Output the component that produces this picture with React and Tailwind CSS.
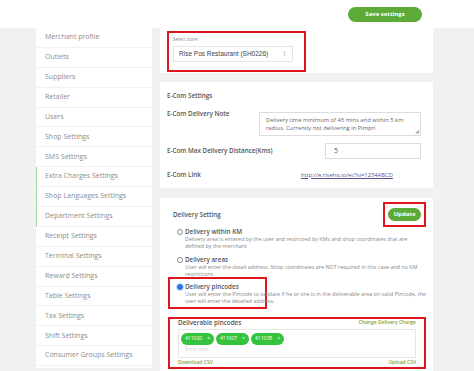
const menuItems = [
  "Merchant profile",
  "Outlets",
  "Suppliers",
  "Retailer",
  "Users",
  "Shop Settings",
  "SMS Settings",
  "Extra Charges Settings",
  "Shop Languages Settings",
  "Department Settings",
  "Receipt Settings",
  "Terminal Settings",
  "Reward Settings",
  "Table Settings",
  "Tax Settings",
  "Shift Settings",
  "Consumer Groups Settings",
];

const highlighted = ["Extra Charges Settings", "Shop Languages Settings", "Department Settings"];

const deliveryOptions = [
  {
    label: "Delivery within KM",
    desc: "Delivery area is entered by the user and restricted by KMs and shop coordinates that are defined by the merchant",
  },
  {
    label: "Delivery areas",
    desc: "User will enter the detail address. Shop coordinates are NOT required in this case and no KM restrictions",
  },
];

const pincodes = ["411020", "411007", "411038"];

function Radio({ checked }) {
  return (
    <span
      className={
        "mt-[1px] h-[6px] w-[6px] shrink-0 rounded-full border " +
        (checked ? "border-[#2a73e8] bg-[#2a73e8] shadow-[0_0_0_1px_#cfe0fb]" : "border-[#888] bg-white")
      }
    />
  );
}

function Sidebar() {
  return (
    <div className="w-[116px] bg-white pb-[2px]">
      {menuItems.map((item) => (
        <div
          key={item}
          className={
            "flex h-[19.9px] items-center border-b border-[#f0f0f0] pl-[8px] text-[7px] text-[#8c8c8c] " +
            (highlighted.includes(item) ? "border-l border-l-[#9fd59a]" : "border-l border-l-white")
          }
        >
          {item}
        </div>
      ))}
    </div>
  );
}

function StoreCard() {
  return (
    <div className="h-[45px] bg-white pl-[7px] pt-[3px]">
      <div className="h-[41px] w-[139px] border-2 border-[#e0161f] pl-[4px] pt-[3px]">
        <div className="text-[4.5px] leading-[6px] text-[#888]">Select store</div>
        <div className="mt-[4px] flex h-[16px] w-[120px] items-center justify-between border border-[#e3e3e3] pl-[5px] pr-[6px] font-['Liberation_Sans',sans-serif] text-[6.5px] text-[#444]">
          <span>Rise Pos Restaurant (SH0226)</span>
          <span className="flex flex-col text-[3px] leading-[3px] text-[#aaa]">
            <span>▲</span>
            <span>▼</span>
          </span>
        </div>
      </div>
    </div>
  );
}

function EcomCard() {
  return (
    <div className="mt-[9px] h-[106px] bg-white pl-[7px] pr-[12px] pt-[10px] text-[6.3px] font-semibold text-[#555]">
      <div className="leading-[8px]">E-Com Settings</div>
      <div className="mt-[10px] flex items-start justify-between">
        <div className="leading-[8px]">E-Com Delivery Note</div>
        <div className="relative mt-[2px] h-[24px] w-[162px] border border-[#dcdcdc] px-[6px] pt-[3px] text-[5.8px] font-normal leading-[8px] text-[#666]">
          Delivery time minimum of 45 mins and within 5 km radius. Currently not delivering in Pimpri
          <span className="absolute bottom-[1px] right-[1px] text-[5px] leading-[5px] text-[#aaa]">◢</span>
        </div>
      </div>
      <div className="mt-[7px] flex items-center justify-between">
        <div className="leading-[8px]">E-Com Max Delivery Distance(Kms)</div>
        <div className="flex h-[16px] w-[96px] items-center border border-[#dcdcdc] pl-[8px] text-[7px] font-normal text-[#555]">5</div>
      </div>
      <div className="mt-[12px] flex h-[8px] items-center">
        <div className="w-[134px]">E-Com Link</div>
        <a className="text-[5.8px] font-normal text-[#5b4f8f] underline">http://e.riseho.io/ec?si=1234ABCD</a>
      </div>
    </div>
  );
}

function DeliveryCard() {
  return (
    <div className="mt-[10px] flex-1 bg-white pl-[8px] pr-[7px] pt-[4px] text-[#555]">
      <div className="flex items-center justify-between">
        <div className="pl-[5px] text-[6.3px] font-semibold leading-[8px]">Delivery Setting</div>
        <div className="flex border-2 border-[#e0161f] px-[3px] py-[4px]">
          <button className="h-[13px] w-[33px] rounded-full bg-[#5cab36] text-[6px] font-bold leading-[13px] text-white">
            Update
          </button>
        </div>
      </div>
      <div className="mt-[1px] flex flex-col gap-[7px] pl-[9px]">
        {deliveryOptions.map((opt) => (
          <div key={opt.label} className="flex gap-[2px]">
            <Radio />
            <div className="w-[233px]">
              <div className="text-[6.3px] font-semibold leading-[8px]">{opt.label}</div>
              <div className="text-[5.4px] leading-[6.5px] text-[#888]">{opt.desc}</div>
            </div>
          </div>
        ))}
      </div>
      <div className="w-[99px] border-2 border-[#e0161f] pb-[3px] pl-[7px] pt-[4px]">
        <div className="flex gap-[2px] whitespace-nowrap">
          <Radio checked />
          <div>
            <div className="text-[6.3px] font-semibold leading-[8px]">Delivery pincodes</div>
            <div className="text-[5.4px] leading-[6.5px] text-[#888]">
              User will enter the Pincode to validate if he or she is in the deliverable area on valid Pincode, the
              <br />
              user will enter the detailed address.
            </div>
          </div>
        </div>
      </div>
      <div className="mt-[8px] border-2 border-[#e0161f] px-[8px]">
        <div className="flex h-[8px] items-center justify-between">
          <span className="text-[6.3px] font-semibold text-[#555]">Deliverable pincodes</span>
          <span className="text-[5px] font-semibold text-[#7fa33e]">Change Delivery Charge</span>
        </div>
        <div className="mt-[2px] h-[29px] border border-[#e3e9df] px-[2px] pt-[3px]">
          <div className="flex gap-[2px]">
            {pincodes.map((p) => (
              <span
                key={p}
                className="flex h-[12px] w-[33px] items-center justify-center gap-[5px] rounded-full bg-[#35c23c] text-[5px] text-white"
              >
                <span>{p}</span>
                <span>×</span>
              </span>
            ))}
          </div>
          <div className="mt-[1px] pl-[4px] text-[5px] text-[#d0d0d0]">Enter new</div>
        </div>
        <div className="flex h-[9px] items-center justify-between text-[5px] font-semibold text-[#7fa33e]">
          <span>Download CSV</span>
          <span>Upload CSV</span>
        </div>
      </div>
    </div>
  );
}

export default function App() {
  return (
    <div className="flex h-[371px] w-[474px] flex-col overflow-hidden bg-[#f1f1f1] font-['Open_Sans',sans-serif]">
      <div className="flex h-[28px] shrink-0 items-center justify-end bg-white pr-[52px]">
        <button className="mt-[1px] h-[15px] w-[74px] rounded-full bg-[#5cab36] text-[6px] font-bold text-white">
          Save settings
        </button>
      </div>
      <div className="flex flex-1 items-start">
        <div className="w-[36px] shrink-0" />
        <Sidebar />
        <div className="ml-[8px] flex h-full w-[273px] flex-col">
          <StoreCard />
          <EcomCard />
          <DeliveryCard />
        </div>
      </div>
    </div>
  );
}
